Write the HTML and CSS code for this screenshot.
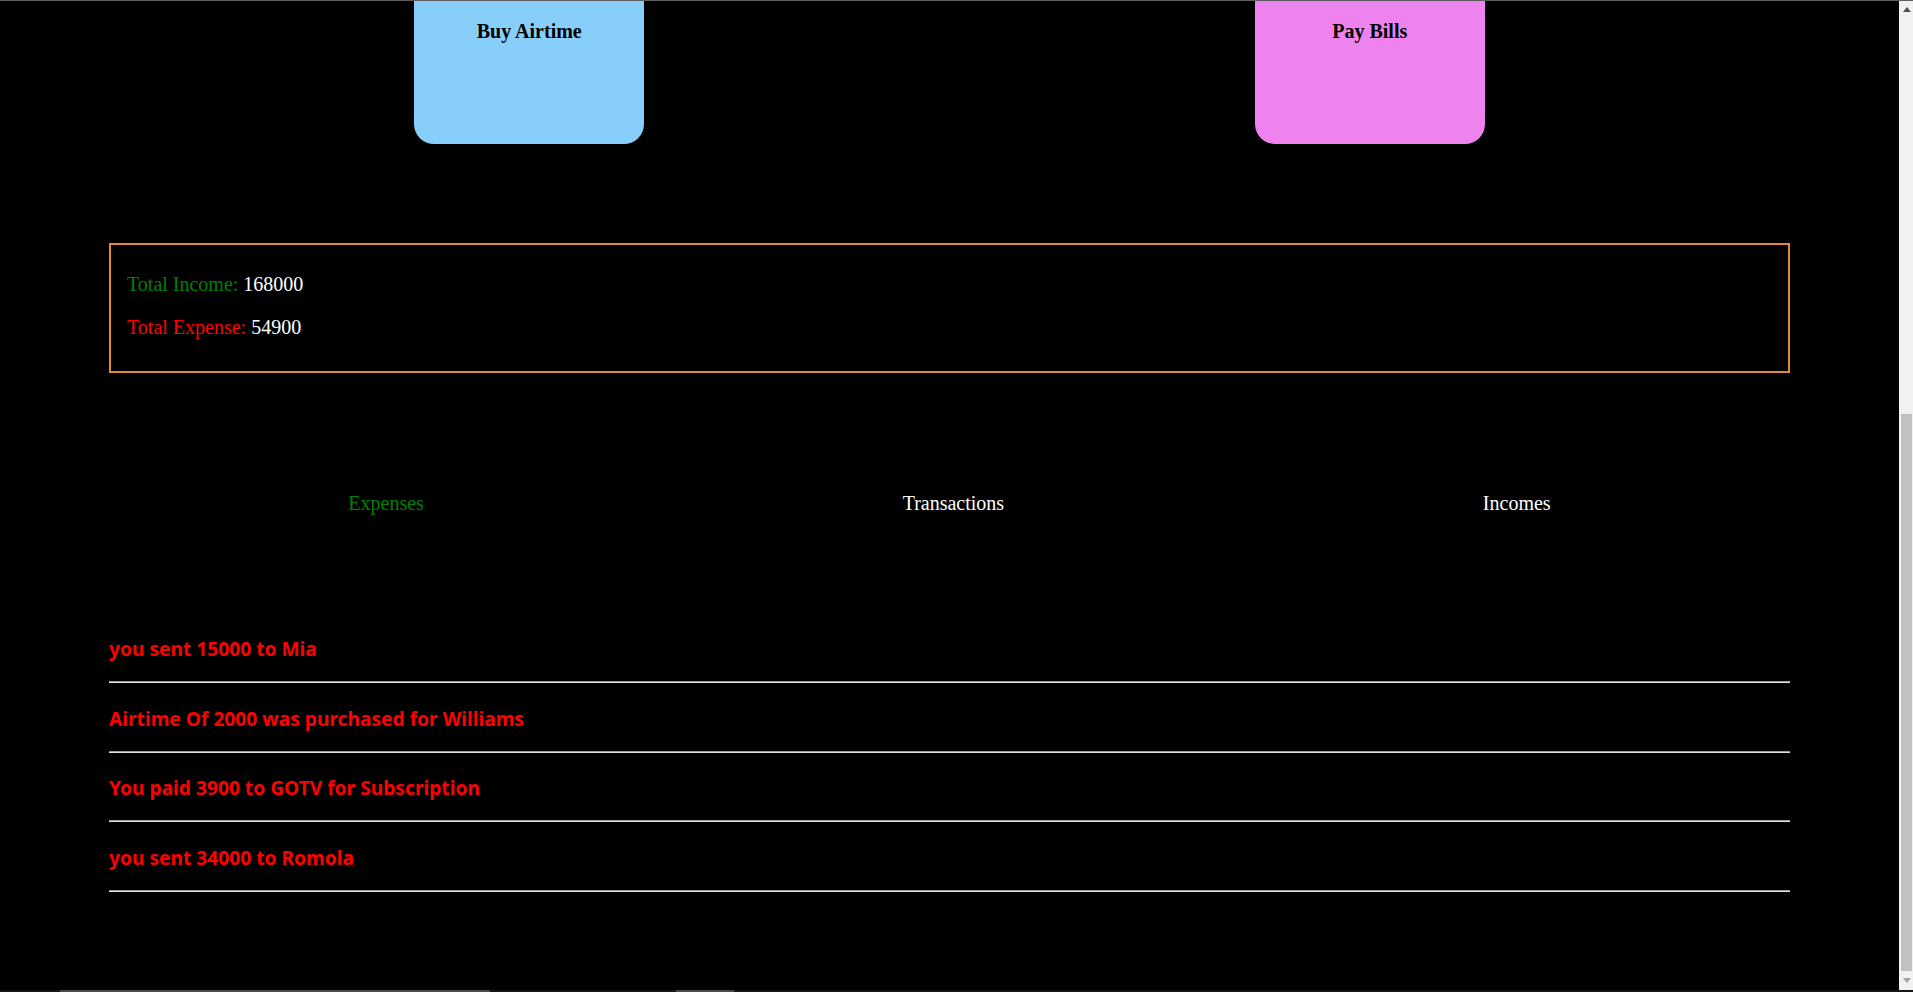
FILE: index.html
```html
<!DOCTYPE html>
<html lang="en">
<head>
<meta charset="utf-8">
<title>Wallet</title>
<link rel="stylesheet" href="styles.css">
</head>
<body>
<div class="topline"></div>
<div class="frame">
  <div class="page">
    <div class="actions">
      <div class="card card-airtime"><span class="card-title">Buy Airtime</span></div>
      <div class="card card-bills"><span class="card-title">Pay Bills</span></div>
    </div>

    <div class="summary">
      <p class="sum-line"><span class="lbl-income">Total Income:</span> <span class="val">168000</span></p>
      <p class="sum-line"><span class="lbl-expense">Total Expense:</span> <span class="val">54900</span></p>
    </div>

    <div class="tabs">
      <span class="tab tab-active">Expenses</span>
      <span class="tab">Transactions</span>
      <span class="tab">Incomes</span>
    </div>

    <div class="list">
      <p class="item">you sent 15000 to Mia</p>
      <hr class="sep">
      <p class="item">Airtime Of 2000 was purchased for Williams</p>
      <hr class="sep">
      <p class="item">You paid 3900 to GOTV for Subscription</p>
      <hr class="sep">
      <p class="item">you sent 34000 to Romola</p>
      <hr class="sep">
    </div>
  </div>
  <div class="scrollbar">
    <div class="sb-btn sb-up"><svg width="8" height="5" viewBox="0 0 8 5"><polygon points="0,5 4,0 8,5" fill="#505050"/></svg></div>
    <div class="sb-track"><div class="sb-thumb"></div></div>
    <div class="sb-btn sb-down"><svg width="8" height="5" viewBox="0 0 8 5"><polygon points="0,0 8,0 4,5" fill="#a3a3a3"/></svg></div>
  </div>
</div>
<div class="bottomline"><div class="hseg hseg-a"></div><div class="hseg hseg-b"></div></div>
</body>
</html>
```

FILE: styles.css
```css
html, body {
  margin: 0;
  padding: 0;
  height: 992px;
  overflow: hidden;
  background: #000;
}

body {
  display: flex;
  flex-direction: column;
  font-family: "Liberation Serif", "Times New Roman", serif;
  font-size: 20px;
  color: #fff;
}

.topline {
  height: 1px;
  background: #5e5e5e;
  flex: none;
}

.frame {
  flex: 1;
  display: flex;
  min-height: 0;
}

.page {
  flex: 1;
  min-width: 0;
  overflow: hidden;
}

/* action cards */
.actions {
  display: flex;
  justify-content: space-around;
  margin: 0 109px;
}

.card {
  width: 230px;
  height: 143px;
  border-radius: 0 0 20px 20px;
  display: flex;
  justify-content: center;
  align-items: flex-start;
  padding-top: 19px;
  box-sizing: border-box;
}

.card-airtime { background: #87cefa; }
.card-bills { background: #ee82ee; }

.card-title {
  color: #000;
  font-weight: bold;
  font-size: 20px;
  line-height: 23px;
}

/* summary */
.summary {
  margin: 99px 109px 0;
  border: 2px solid #e38a2b;
  padding: 8px 16px 12px;
}

.sum-line {
  margin: 20px 0;
  line-height: 23px;
}

.lbl-income { color: #008000; }
.lbl-expense { color: #ff0000; }
.val { color: #fff; }

/* tabs */
.tabs {
  display: flex;
  justify-content: space-around;
  margin: 119px 109px 0;
  line-height: 23px;
}

.tab { color: #fff; }
.tab-active { color: #008000; }

/* list */
.list {
  margin: 120px 109px 0;
}

.item {
  margin: 21.5px 0 18.5px;
  font-family: "Noto Sans", "Open Sans", sans-serif;
  font-weight: 700;
  font-size: 19.2px;
  line-height: 27.5px;
  color: #ff0000;
}

.sep {
  margin: 0;
  height: 0;
  border: 0;
  border-top: 1px solid #9c9c9c;
  border-bottom: 1px solid #e4e4e4;
}

/* fake scrollbar */
.scrollbar {
  width: 14px;
  flex: none;
  background: #f1f1f1;
  display: flex;
  flex-direction: column;
}

.sb-btn {
  flex: none;
  display: flex;
  justify-content: center;
  padding-left: 2px;
}

.sb-up {
  height: 17px;
  align-items: center;
}

.sb-down {
  height: 19px;
  align-items: center;
}

.sb-track {
  flex: 1;
  display: flex;
  flex-direction: column;
  justify-content: flex-end;
}

.sb-thumb {
  height: 557px;
  margin: 0 1px 0 2px;
  background: #c1c1c1;
}

.bottomline {
  height: 2px;
  flex: none;
  background: #161616;
  display: flex;
}

.hseg {
  height: 2px;
  background: #4a4a4a;
}

.hseg-a { margin-left: 60px; width: 430px; }
.hseg-b { margin-left: 186px; width: 58px; }
```
